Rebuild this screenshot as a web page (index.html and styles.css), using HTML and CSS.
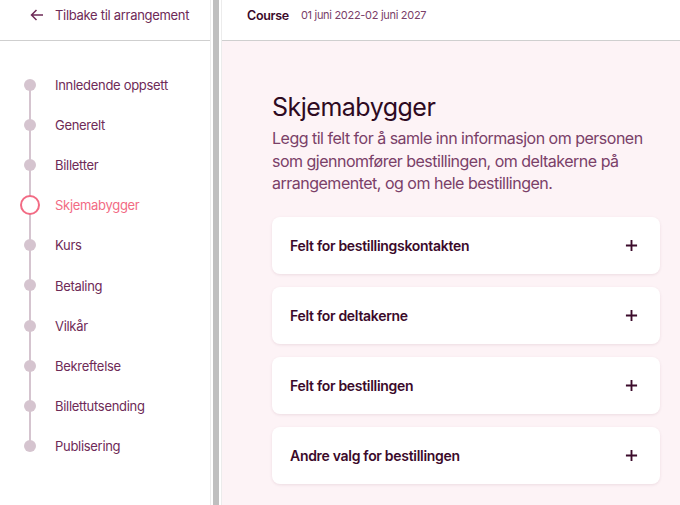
FILE: index.html
```html
<!DOCTYPE html>
<html lang="no">
<head>
    <meta charset="UTF-8">
    <link rel="stylesheet" href="styles.css">
</head>
<body>

<div class="layout">
    <!-- Sidemeny -->
    <aside class="sidebar">
        <div class="sidebar-header">
            <a class="back-link" href="#">
                <svg class="back-icon" viewBox="0 0 16 16" fill="none" stroke="currentColor" stroke-width="1.5">
                    <path d="M14 8H2.5M7.5 3L2.5 8l5 5"/>
                </svg>
                Tilbake til arrangement
            </a>
        </div>
        <ul class="steps">
            <li class="step">Innledende oppsett</li>
            <li class="step">Generelt</li>
            <li class="step">Billetter</li>
            <li class="step active">Skjemabygger</li>
            <li class="step">Kurs</li>
            <li class="step">Betaling</li>
            <li class="step">Vilkår</li>
            <li class="step">Bekreftelse</li>
            <li class="step">Billettutsending</li>
            <li class="step">Publisering</li>
        </ul>
    </aside>

    <div class="gutter"><div class="gutter-bar"></div></div>

    <!-- Hovedinnhold -->
    <main class="main">
        <div class="main-header">
            <span class="event-name">Course</span>
            <span class="event-date">01 juni 2022-02 juni 2027</span>
        </div>
        <div class="content">
            <h1 class="page-title">Skjemabygger</h1>
            <p class="page-description">Legg til felt for å samle inn informasjon om personen som gjennomfører bestillingen, om deltakerne på arrangementet, og om hele bestillingen.</p>

            <div class="sections">
                <div class="section-card">
                    <span class="section-title">Felt for bestillingskontakten</span>
                    <svg class="plus-icon" viewBox="0 0 14 14" fill="none" stroke="currentColor" stroke-width="2">
                        <path d="M7 1v12M1 7h12"/>
                    </svg>
                </div>
                <div class="section-card">
                    <span class="section-title">Felt for deltakerne</span>
                    <svg class="plus-icon" viewBox="0 0 14 14" fill="none" stroke="currentColor" stroke-width="2">
                        <path d="M7 1v12M1 7h12"/>
                    </svg>
                </div>
                <div class="section-card">
                    <span class="section-title">Felt for bestillingen</span>
                    <svg class="plus-icon" viewBox="0 0 14 14" fill="none" stroke="currentColor" stroke-width="2">
                        <path d="M7 1v12M1 7h12"/>
                    </svg>
                </div>
                <div class="section-card">
                    <span class="section-title">Andre valg for bestillingen</span>
                    <svg class="plus-icon" viewBox="0 0 14 14" fill="none" stroke="currentColor" stroke-width="2">
                        <path d="M7 1v12M1 7h12"/>
                    </svg>
                </div>
            </div>
        </div>
    </main>
</div>

</body>
</html>
```

FILE: styles.css
```css
/* Generelt */
html, body {
    margin: 0;
    height: 100%;
}

body {
    font-family: Inter, "Noto Sans", sans-serif;
    color: #3b0a2a;
    background: #ffffff;
    letter-spacing: -0.3px;
    overflow: hidden;
}

.layout {
    display: flex;
    height: 505px;
}

/* Sidemeny */
.sidebar {
    width: 210px;
    flex-shrink: 0;
    border-right: 1px solid #ececec;
    background: #ffffff;
}

.sidebar-header {
    height: 40px;
    border-bottom: 1px solid #cfcfcf;
    display: flex;
    align-items: center;
    padding-left: 29px;
}

.back-link {
    display: flex;
    align-items: center;
    gap: 10px;
    color: #6e2a57;
    text-decoration: none;
    font-size: 13px;
    margin-top: -10px;
}

.back-icon {
    width: 16px;
    height: 16px;
}

.steps {
    list-style: none;
    margin: 0;
    padding: 24px 0 0;
}

.step {
    position: relative;
    height: 40.1px;
    display: flex;
    align-items: center;
    padding-left: 55px;
    font-size: 13px;
    color: #6e2a57;
}

/* Punkt */
.step::before {
    content: "";
    position: absolute;
    left: 24px;
    top: 14px;
    width: 12px;
    height: 12px;
    border-radius: 50%;
    background: #d5c4cf;
    z-index: 1;
}

/* Linje mellom punktene */
.step::after {
    content: "";
    position: absolute;
    left: 29px;
    top: 20px;
    width: 2px;
    height: 41px;
    background: #d5c4cf;
}

.step:last-child::after {
    display: none;
}

.step.active {
    color: #f26b84;
}

.step.active::before {
    left: 20px;
    top: 10px;
    width: 16px;
    height: 16px;
    background: #ffffff;
    border: 2px solid #f26b84;
}

/* Skillelinje */
.gutter {
    width: 10px;
    flex-shrink: 0;
    display: flex;
    justify-content: center;
    border-right: 1px solid #ececec;
    background: #ffffff;
}

.gutter-bar {
    width: 6px;
    background: #bfbfbf;
}

/* Hovedinnhold */
.main {
    flex: 1;
    display: flex;
    flex-direction: column;
    background: #fdf3f6;
    min-width: 0;
}

.main-header {
    height: 40px;
    flex-shrink: 0;
    border-bottom: 1px solid #cfcfcf;
    background: #ffffff;
    display: flex;
    align-items: center;
    gap: 12px;
    padding-left: 25px;
}

.event-name {
    font-size: 12.5px;
    font-weight: 600;
    color: #3b0a2a;
    margin-top: -10px;
}

.event-date {
    font-size: 11px;
    color: #7a4068;
    margin-top: -10px;
}

.content {
    padding: 50px 20px 0 50px;
}

.page-title {
    margin: 0;
    font-size: 25px;
    font-weight: 400;
    line-height: 32px;
    letter-spacing: -0.5px;
    color: #2e0a22;
}

.page-description {
    margin: 4px 0 0;
    width: 390px;
    font-size: 16px;
    line-height: 22.5px;
    letter-spacing: -0.5px;
    color: #7a4068;
}

.sections {
    display: flex;
    flex-direction: column;
    gap: 13px;
    margin-top: 22px;
    width: 388px;
}

.section-card {
    height: 57px;
    flex-shrink: 0;
    display: flex;
    align-items: center;
    justify-content: space-between;
    padding: 0 22px 0 18px;
    background: #ffffff;
    border-radius: 8px;
    box-shadow: 0 1px 3px rgba(120, 60, 90, 0.12);
}

.section-title {
    font-size: 14px;
    font-weight: 600;
    color: #3b0a2a;
}

.plus-icon {
    width: 13px;
    height: 13px;
    color: #3b0a2a;
}
```
